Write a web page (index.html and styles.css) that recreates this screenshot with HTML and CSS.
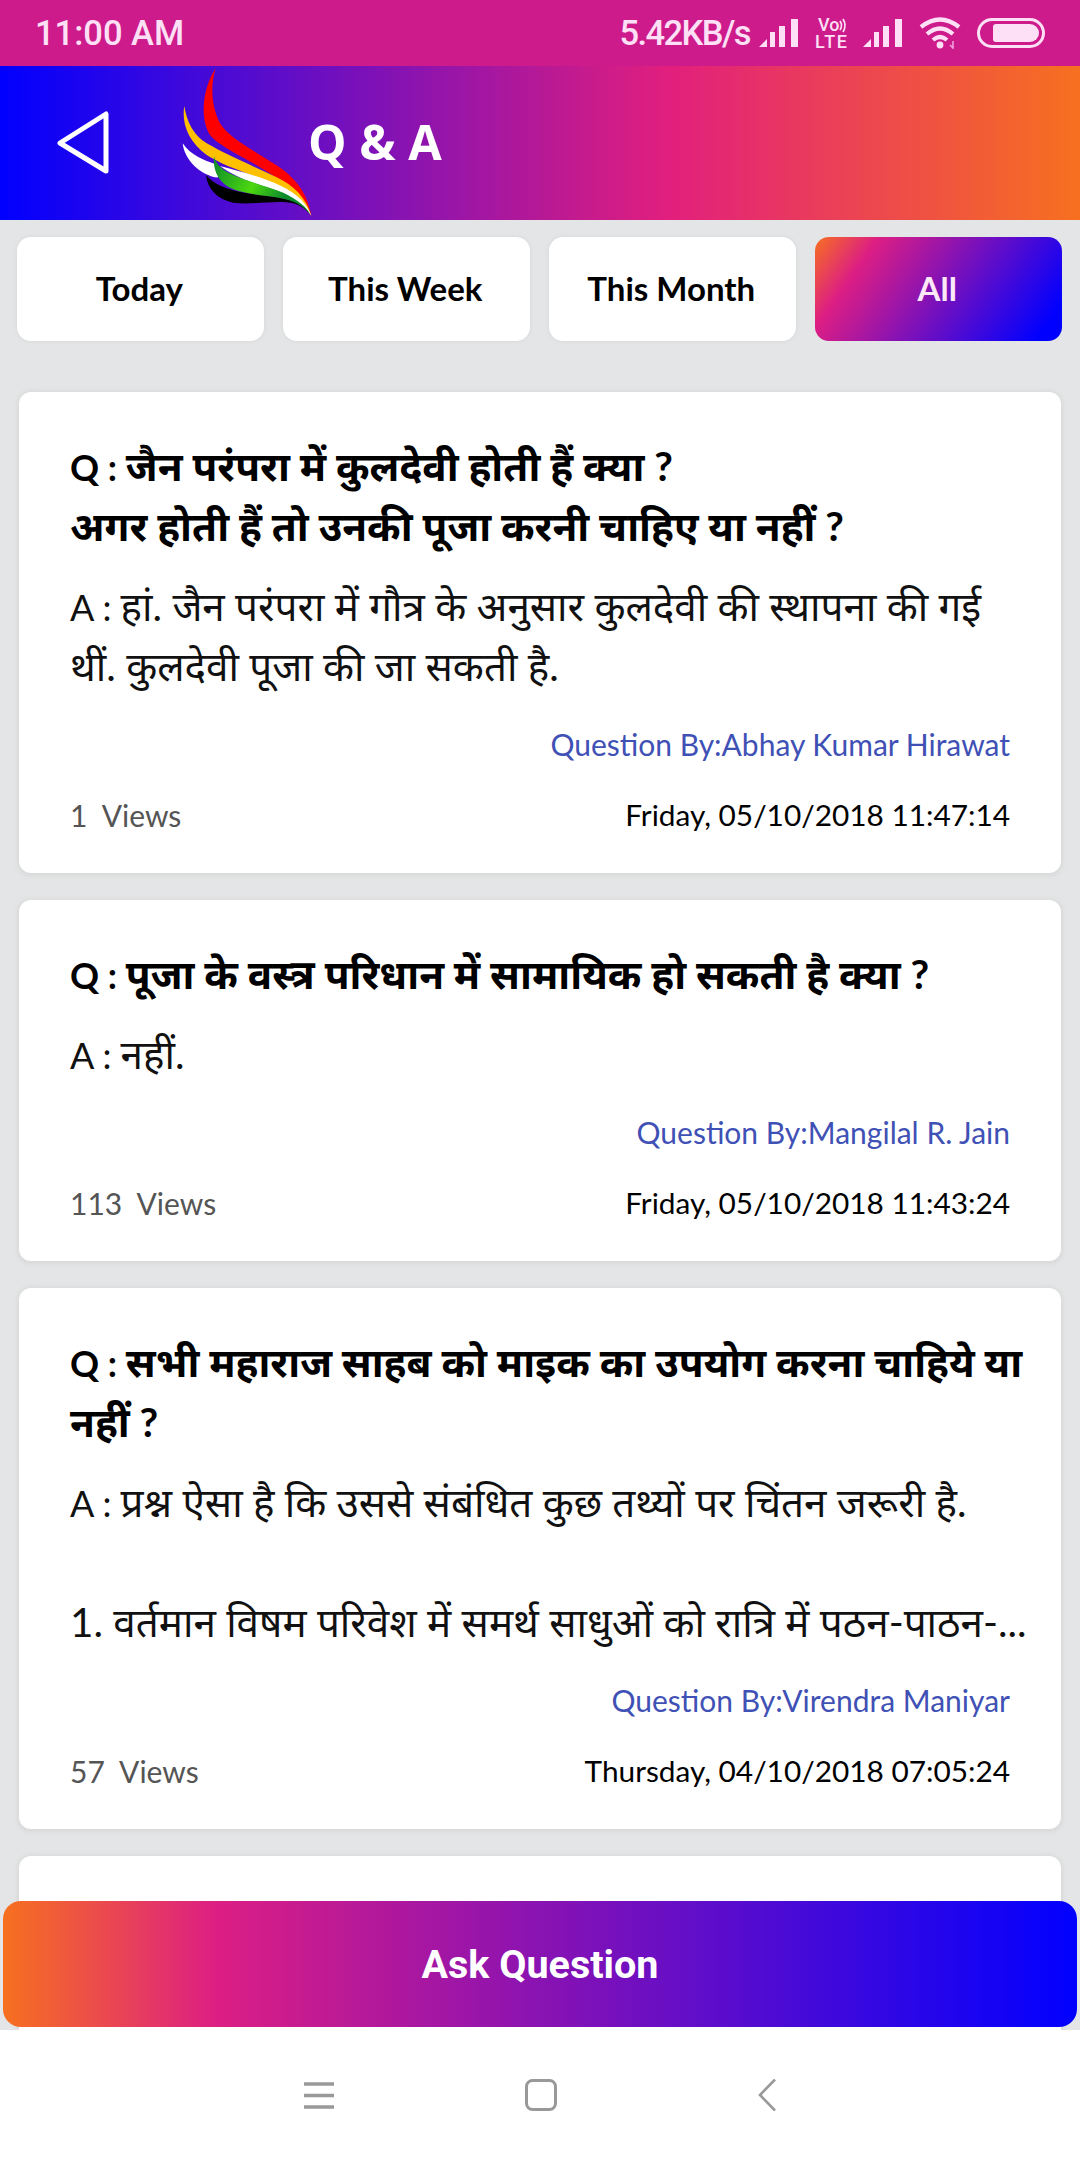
FILE: index.html
```html
<!DOCTYPE html>
<html lang="hi">
<head>
<meta charset="utf-8">
<title>Q &amp; A</title>
<link rel="stylesheet" href="styles.css">
</head>
<body>
<div class="phone">
  <div class="status">
    <span class="time">11:00 AM</span>
    <div class="status-right">
      <span class="speed">5.42KB/s</span>
      <svg class="sig" viewBox="0 0 40 30"><path d="M0 29 L8 21 V29Z M11 14 H16 V29 H11Z M20 8 H26 V29 H20Z M32 1 H39 V29 H32Z" fill="#fde0f5"/></svg>
      <svg class="volte" viewBox="0 0 32 30"><text class="volte-t" x="3" y="13">Vo</text><path d="M25 3 Q28 7.5 25 12 M28 1 Q32 7.5 28 14" fill="none" stroke="#fde0f5" stroke-width="1.8"/><text class="volte-t" x="0" y="29.5" textLength="32">LTE</text></svg>
      <svg class="sig" viewBox="0 0 40 30"><path d="M0 29 L8 21 V29Z M11 14 H16 V29 H11Z M20 8 H26 V29 H20Z M32 1 H39 V29 H32Z" fill="#fde0f5"/></svg>
      <svg class="wifi" viewBox="0 0 42 32"><g fill="none" stroke="#fde0f5" stroke-width="4.2"><path d="M2 10 Q21 -5 40 10"/><path d="M8 17 Q21 6 34 17"/><path d="M14 23 Q21 17 28 23"/></g><circle cx="21" cy="28" r="3.4" fill="#fde0f5"/><path d="M34 24 V31 L31 28" fill="none" stroke="#f0a0dc" stroke-width="1.6"/></svg>
      <span class="battery"><span class="battery-fill"></span></span>
    </div>
  </div>
  <header class="appbar">
    <svg class="back" viewBox="0 0 52 64"><path d="M3 32 L49 3 V60Z" fill="none" stroke="#fff" stroke-width="5" stroke-linejoin="round"/></svg>
    <svg class="logo" viewBox="36 18 390 462">
      <defs>
        <linearGradient id="gr" x1="0" y1="0" x2="1" y2="0.3"><stop offset="0" stop-color="#0c8a2c"/><stop offset="0.5" stop-color="#4cd80e"/><stop offset="0.85" stop-color="#0c8a2c"/></linearGradient>
      </defs>
      <path d="M108 345 C112 385 140 418 190 428 C250 436 320 418 370 430 C395 438 412 452 424 468 C405 430 375 420 330 412 C270 405 210 400 170 385 C145 375 125 365 108 345Z" fill="#000"/>
      <path d="M38 250 C42 290 75 330 115 345 C125 350 135 353 145 352 L135 312 C105 302 60 285 38 250Z" fill="#fff"/>
      <path d="M137 25 C100 80 88 170 118 222 C150 270 300 320 372 398 C395 425 412 448 424 468 C415 410 385 365 340 330 C270 280 180 240 150 190 C125 140 120 80 137 25Z" fill="#f00"/>
      <path d="M43 138 C34 190 55 245 110 285 C170 325 300 360 375 405 C400 425 415 448 424 468 C410 415 370 375 320 352 C250 318 170 285 110 250 C70 225 50 185 43 138Z" fill="#ffc000"/>
      <path d="M150 318 C230 340 340 365 395 420 C410 438 420 455 424 468 C400 430 350 400 270 375 C220 360 180 340 150 318Z" fill="#fff"/>
      <path d="M132 290 C128 330 145 370 190 388 C250 410 340 405 385 432 C405 445 418 458 424 468 C410 440 385 420 340 398 C280 375 210 358 170 335 C150 322 138 310 132 290Z" fill="url(#gr)"/>
    </svg>
    <h1 class="title">Q &amp; A</h1>
  </header>
  <main class="main">
    <nav class="tabs">
      <button class="tab">Today</button>
      <button class="tab">This Week</button>
      <button class="tab">This Month</button>
      <button class="tab tab-active">All</button>
    </nav>
    <div class="list">
      <article class="card">
        <p class="q"><span class="lead">Q : </span>जैन परंपरा में कुलदेवी होती हैं क्या ?<br>अगर होती हैं तो उनकी पूजा करनी चाहिए या नहीं ?</p>
        <p class="a"><span class="lead">A : </span>हां. जैन परंपरा में गौत्र के अनुसार कुलदेवी की स्थापना की गई<br>थीं. कुलदेवी पूजा की जा सकती है.</p>
        <p class="by">Question By:Abhay Kumar Hirawat</p>
        <div class="meta"><span class="views">1&nbsp; Views</span><span class="date">Friday, 05/10/2018 11:47:14</span></div>
      </article>
      <article class="card">
        <p class="q"><span class="lead">Q : </span>पूजा के वस्त्र परिधान में सामायिक हो सकती है क्या ?</p>
        <p class="a"><span class="lead">A : </span>नहीं.</p>
        <p class="by">Question By:Mangilal R. Jain</p>
        <div class="meta"><span class="views">113&nbsp; Views</span><span class="date">Friday, 05/10/2018 11:43:24</span></div>
      </article>
      <article class="card">
        <p class="q"><span class="lead">Q : </span>सभी महाराज साहब को माइक का उपयोग करना चाहिये या<br>नहीं ?</p>
        <p class="a"><span class="lead">A : </span>प्रश्न ऐसा है कि उससे संबंधित कुछ तथ्यों पर चिंतन जरूरी है.<br><br><span class="clip">1. वर्तमान विषम परिवेश में समर्थ साधुओं को रात्रि में पठन-पाठन-...</span></p>
        <p class="by">Question By:Virendra Maniyar</p>
        <div class="meta"><span class="views">57&nbsp; Views</span><span class="date">Thursday, 04/10/2018 07:05:24</span></div>
      </article>
      <article class="card card-last"></article>
    </div>
    <button class="ask">Ask Question</button>
  </main>
  <footer class="navbar">
    <svg class="ic-menu" viewBox="0 0 30 27"><path d="M0 2 H30 M0 13.5 H30 M0 25 H30" stroke="#999" stroke-width="3.4" fill="none"/></svg>
    <svg class="ic-home" viewBox="0 0 32 32"><rect x="1.5" y="1.5" width="29" height="29" rx="6" stroke="#999" stroke-width="3" fill="none"/></svg>
    <svg class="ic-back" viewBox="0 0 18 32"><path d="M17 0.5 L2 16 L17 31.5" stroke="#999" stroke-width="2.6" fill="none"/></svg>
  </footer>
</div>
</body>
</html>
```
FILE: styles.css
```css
* { box-sizing: border-box; }
html, body { margin: 0; padding: 0; }
body { font-family: "Lato", "Noto Sans", sans-serif; background: #fff; }
.phone { width: 1080px; height: 2160px; display: flex; flex-direction: column; overflow: hidden; }

.status { height: 66px; flex: none; background: #cd1b8c; color: #fde0f5; display: flex; align-items: center; justify-content: space-between; padding: 0 35px; font-family: Roboto, sans-serif; font-weight: 500; }
.time { font-size: 34.5px; }
.status-right { display: flex; align-items: center; }
.speed { font-size: 34.5px; margin-right: 9px; letter-spacing: -1.6px; }
.sig { width: 40px; height: 30px; }
.volte { width: 32px; height: 30px; margin: 0 16px; overflow: visible; }
.volte-t { font-family: Roboto, sans-serif; font-size: 18px; font-weight: 500; fill: #fde0f5; }
.wifi { width: 42px; height: 32px; margin-left: 16px; }
.battery { width: 68px; height: 30px; margin-left: 16px; border: 3px solid #fde0f5; border-radius: 15px; padding: 3px 3px 3px 13px; display: block; }
.battery-fill { display: block; height: 100%; background: #fde0f5; border-radius: 3px 9px 9px 3px; }

.appbar { height: 154px; flex: none; background: linear-gradient(90deg, #0000ff 0%, #e21f7d 62%, #f7701f 100%); display: flex; align-items: center; }
.back { width: 52px; height: 64px; margin-left: 57px; }
.logo { width: 130px; height: 154px; margin-left: 73px; }
.title { margin: 0 0 5px -4px; color: #fff; font-family: "Open Sans", sans-serif; font-weight: 700; font-size: 48.5px; }

.main { flex: 1; min-height: 0; background: #e4e5e6; position: relative; overflow: hidden; }
.tabs { display: grid; grid-template-columns: repeat(4, 247.5px); column-gap: 18.5px; padding: 17px 0 0 16.5px; }
.tab { height: 104px; border: 0; border-radius: 14px; background: #fff; box-shadow: 0 0 4px #d4d5d6; color: #000; font-family: "Lato", sans-serif; font-weight: 700; font-size: 33px; padding: 0 2px 3px 0; }
.tab-active { background: linear-gradient(125deg, #f7701f 0%, #dc1e84 20%, #0000ff 92%); color: #fde8f8; box-shadow: none; }

.list { padding: 51px 19px 0 19px; display: flex; flex-direction: column; gap: 27px; }
.card { background: #fff; border-radius: 12px; box-shadow: 0 1px 4px 2px #d8d9d9; padding: 44px 35px 38px 51px; }
.card-last { height: 200px; flex: none; }
.q { margin: 0; font-weight: 700; font-size: 40.5px; line-height: 60px; color: #000; }
.a { margin: 20px 0 0; font-size: 40.4px; line-height: 60px; color: #111; }
.lead { font-size: 36px; line-height: 1; }
.clip { white-space: nowrap; }
.by { margin: 28px 16px 0 0; text-align: right; font-size: 30px; line-height: 40px; color: #3f51b5; }
.meta { margin: 31px 16px 0 0; display: flex; justify-content: space-between; align-items: center; line-height: 40px; }
.views { color: #555; font-size: 30px; }
.date { color: #000; font-size: 29.8px; }

.ask { position: absolute; left: 3px; right: 3px; bottom: 3px; height: 126px; border: 0; border-radius: 18px; background: linear-gradient(90deg, #f7701f 0%, #dc1e84 20%, #0000ff 100%); color: #fff; font-family: Roboto, sans-serif; font-weight: 700; font-size: 39.5px; }

.navbar { height: 130px; flex: none; background: #fff; display: flex; justify-content: center; align-items: center; }
.ic-menu { width: 30px; height: 27px; }
.ic-home { width: 32px; height: 32px; margin: 0 201px 0 191px; }
.ic-back { width: 18px; height: 32px; }
```
